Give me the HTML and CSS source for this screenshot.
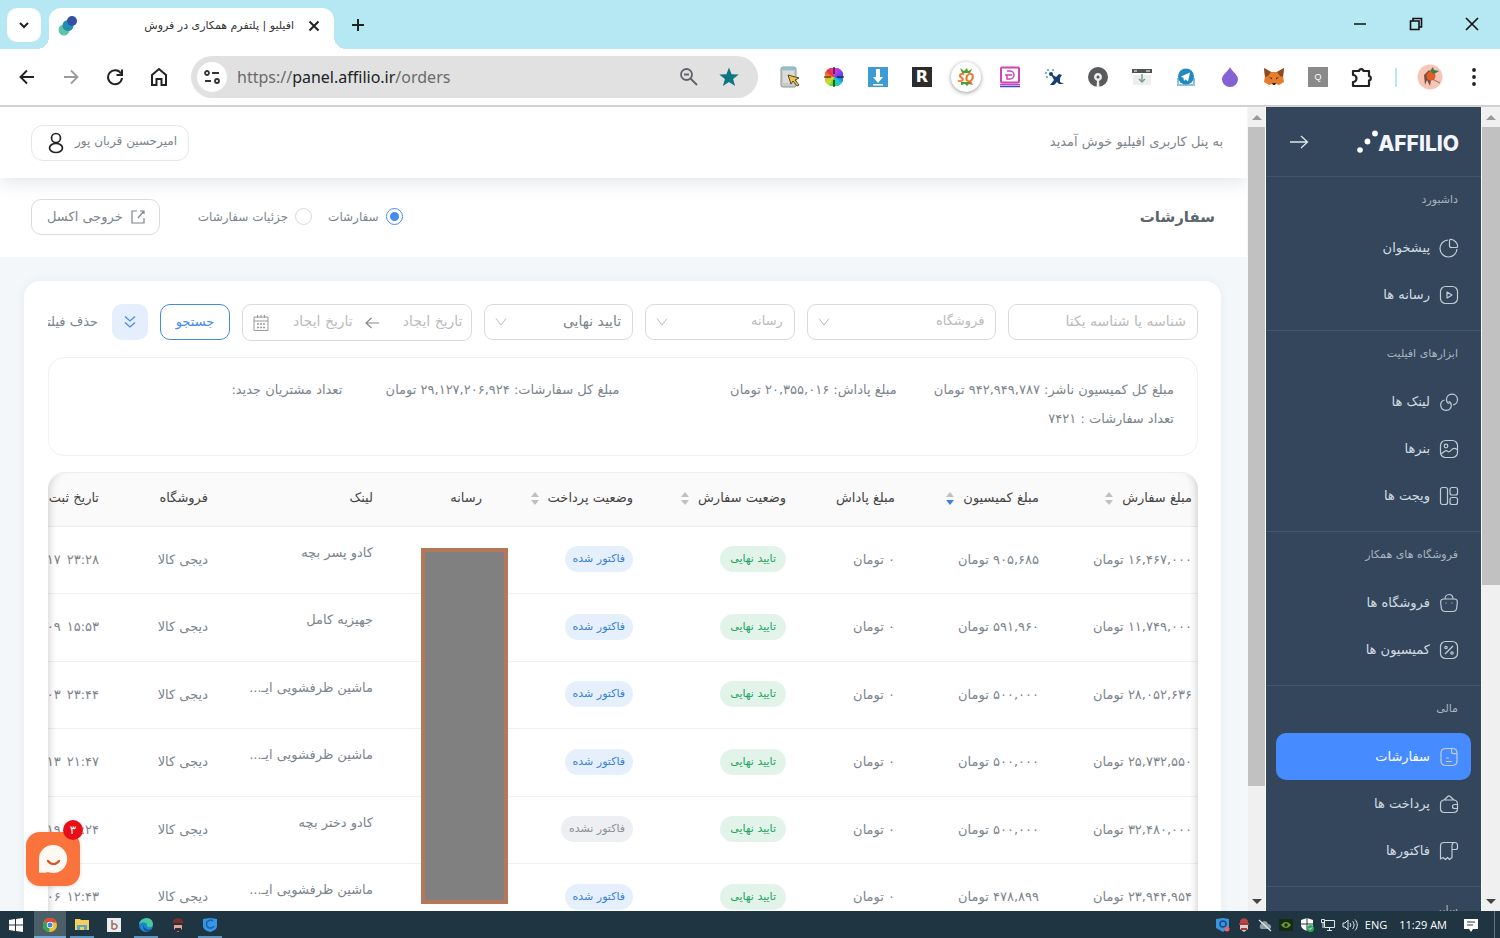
FILE: index.html
```html
<!DOCTYPE html>
<html lang="fa">
<head>
<meta charset="utf-8">
<title>افیلیو | پلتفرم همکاری در فروش</title>
<link rel="stylesheet" href="styles.css">
</head>
<body>
<div class="screen">
  <header class="tabstrip">
    <button class="tab-search" aria-label="Search tabs"><svg width="12" height="12" viewBox="0 0 12 12"><path d="M2 4l4 4 4-4" fill="none" stroke="#222" stroke-width="2"/></svg></button>
    <div class="tab">
      <svg width="22" height="22" viewBox="0 0 22 22"><circle cx="7" cy="15" r="5.500" fill="#5fc3a4"/><circle cx="11" cy="10.500" r="5.500" fill="#1f8fb4"/><circle cx="15" cy="6" r="5" fill="#3650a4"/></svg>
      <span class="tab-title" dir="rtl">افیلیو | پلتفرم همکاری در فروش</span>
      <button class="bare" aria-label="Close tab"><svg width="12" height="12" viewBox="0 0 12 12"><path d="M1.500 1.500l9 9M10.500 1.500l-9 9" stroke="#222" stroke-width="2"/></svg></button>
    </div>
    <button class="bare new-tab" aria-label="New tab"><svg width="14" height="14" viewBox="0 0 14 14"><path d="M7 1v12M1 7h12" stroke="#222" stroke-width="2"/></svg></button>
    <div class="window-controls">
      <button class="bare" aria-label="Minimize"><svg width="14" height="14" viewBox="0 0 14 14"><path d="M1 7h12" stroke="#111" stroke-width="1.500"/></svg></button>
      <button class="bare" aria-label="Restore"><svg width="14" height="14" viewBox="0 0 14 14" fill="none" stroke="#111" stroke-width="1.600"><path d="M1.500 4h8.500v8.500H1.500zM4 4V1.500h8.500V10H10"/></svg></button>
      <button class="bare" aria-label="Close"><svg width="14" height="14" viewBox="0 0 14 14"><path d="M1 1l12 12M13 1L1 13" stroke="#111" stroke-width="1.600"/></svg></button>
    </div>
  </header>

  <nav class="toolbar" aria-label="Browser toolbar">
    <button class="tool" aria-label="Back"><svg width="16" height="16" viewBox="0 0 16 16" fill="none" stroke="#222" stroke-width="1.900"><path d="M15 8H2M8 1.500L1.500 8 8 14.500"/></svg></button>
    <button class="tool" aria-label="Forward"><svg width="16" height="16" viewBox="0 0 16 16" fill="none" stroke="#9a9a9a" stroke-width="1.800"><path d="M1 8h13M8 1.500L14.500 8 8 14.500"/></svg></button>
    <button class="tool" aria-label="Reload"><svg width="18" height="18" viewBox="0 0 18 18" fill="none" stroke="#222" stroke-width="2"><path d="M15 5.500A7 7 0 1 0 16 10M16 1.500v5.500h-5.500"/></svg></button>
    <button class="tool" aria-label="Home"><svg width="18" height="20" viewBox="0 0 18 20" fill="none" stroke="#222" stroke-width="2"><path d="M2 8l7-6 7 6v10h-4.500v-6h-5v6H2z"/></svg></button>
    <div class="omnibox">
      <button class="site-info" aria-label="Site information"><svg width="18" height="14" viewBox="0 0 18 14" fill="none" stroke="#333" stroke-width="1.800"><circle cx="4" cy="3" r="2"/><path d="M9 3h7M2 11h6"/><circle cx="14" cy="11" r="2"/></svg></button>
      <a class="url" href="#">https://<b>panel.affilio.ir</b>/orders</a>
      <button class="bare" aria-label="Zoom"><svg width="20" height="20" viewBox="0 0 20 20" fill="none" stroke="#5f6368" stroke-width="1.800"><circle cx="7.500" cy="7.500" r="5.500"/><path d="M11.500 11.500l6.500 6.500M5 7.500h5"/></svg></button>
      <button class="bare star" aria-label="Bookmark"><svg width="20" height="20" viewBox="0 0 20 20"><path d="M10 0.500l2.600 6.700 7.100.3-5.600 4.500 2 7L10 15l-6.100 4 2-7L.3 7.500l7.100-.3z" fill="#0d7680"/></svg></button>
    </div>
    <div class="extensions">
      <button class="tool" aria-label="Picker"><svg width="22" height="22" viewBox="0 0 22 22"><rect x="2" y="1" width="15" height="20" rx="2" fill="#c7cbc9" stroke="#8a9596"/><path d="M2 4V1h15v3z" fill="#8dbfca"/><rect x="4" y="5" width="11" height="12" fill="#dadcda"/><path d="M9 9l11 3-4 2 4 5-2 1-4-5-2 3z" fill="#edc443" stroke="#554a28"/></svg></button>
      <button class="tool" aria-label="Colors"><span class="wheel"><svg width="20" height="20" viewBox="0 0 20 20"><path d="M10 0v7M10 13v7M0 10h7M13 10h7" stroke="#111" stroke-width="1.200"/></svg></span></button>
      <button class="tool" aria-label="Download"><svg width="20" height="20" viewBox="0 0 20 20"><path fill="#3e9bd6" d="M0 0h20v20H0z"/><path fill="#fff" d="M8 2h4v8h3l-5 6-5-6h3zM5 17h10v1.500H5z"/></svg></button>
      <button class="tool ext-r">R</button>
      <button class="tool"><span class="sq"><svg width="20" height="20" viewBox="0 0 20 20" fill="#4e9f34"><path d="M4 1l4 3 3-3 1 3 4-2-2 4H6zM5 15h10l2 3-4-1-2 2-2-2-4 1z"/></svg><span>SQ</span></span></button>
      <button class="tool" aria-label="D"><svg width="22" height="22" viewBox="0 0 22 22" fill="none"><rect x="2" y="1.500" width="18" height="15" rx="1" stroke="#d243b2" stroke-width="2"/><path d="M8 5h3a4 4 0 0 1 0 8H8V9h5M6 9h4" stroke="#d243b2" stroke-width="1.500"/><path d="M1 18.500h20" stroke="#bd45ce" stroke-width="1.500"/><path d="M1 20.500h20" stroke="#4349b8" stroke-width="1.500"/></svg></button>
      <button class="tool" aria-label="Satellite"><svg width="20" height="20" viewBox="0 0 20 20" fill="#163f78"><path d="M6 6l6 4 3-3 3 1-2 3 0 4 4 2h-5l-2-2-3 3H6l4-5z"/><circle cx="7" cy="7" r="2"/><g fill="#4a9ed0"><circle cx="2" cy="6" r="1"/><circle cx="4" cy="3" r="1"/><circle cx="3" cy="10" r="1"/><circle cx="9" cy="3" r="1"/></g></svg></button>
      <button class="tool" aria-label="Keyhole"><svg width="20" height="20" viewBox="0 0 20 20"><circle cx="10" cy="10" r="10" fill="#585a5b"/><path d="M8.500 20l.5-6-1.500-1a4 4 0 1 1 5 0L11 14l.5 6z" fill="#eee"/><circle cx="10" cy="10" r="1.500" fill="#555"/></svg></button>
      <button class="tool" aria-label="Save page"><svg width="20" height="18" viewBox="0 0 20 18"><path d="M0 1h20v4H0z" fill="#4d5355"/><path d="M2 3h3M14 3h4" stroke="#fff"/><path d="M1 7h18v10H1z" fill="#eee"/><path d="M10 6v8M7 11l3 3 3-3" fill="none" stroke="#71a58f" stroke-width="1.500"/></svg></button>
      <button class="tool" aria-label="Telegram"><svg width="18" height="19" viewBox="0 0 18 19"><path d="M1 10v7h16v-7" fill="none" stroke="#8cc2de" stroke-width="2"/><circle cx="9" cy="8.500" r="8" fill="#2289c2"/><path d="M4 8.500l9-4-2 9-2.500-2L7 13l-.5-3z" fill="#fff"/></svg></button>
      <button class="tool" aria-label="Drop"><svg width="16" height="20" viewBox="0 0 16 20"><path d="M8 0c2 5 8 7 8 12.500a8 7.500 0 0 1-16 0C0 7 6 5 8 0z" fill="#8561d3"/></svg></button>
      <button class="tool" aria-label="Wallet"><svg width="20" height="18" viewBox="0 0 20 18"><path d="M0 0l7 4h6l7-4-1 8 1 6-5 3-3-1H8l-3 1-5-3 1-6z" fill="#e67c2c"/><path d="M0 0l7 4-3 4-3 1zM20 0l-7 4 3 4 3 1z" fill="#874b27"/><path d="M5 9l3 1v1.500zM15 9l-3 1v1.500zM8 15h4l-1 2H9z" fill="#2b2524"/></svg></button>
      <button class="tool"><span class="ext-q">Q</span></button>
      <button class="tool" aria-label="Extensions"><svg width="22" height="21" viewBox="0 0 22 21"><path d="M2 4h6a2.300 2.300 0 0 1 4.500 0H18v5a2.300 2.300 0 0 1 0 4.500V19H2v-4a3 3 0 0 0 0-7z" fill="none" stroke="#222" stroke-width="2.200" stroke-linejoin="round"/></svg></button>
    </div>
    <span class="tool-divider"></span>
    <button class="tool" aria-label="Profile"><svg width="26" height="26" viewBox="0 0 26 26"><circle cx="13" cy="13" r="12.500" fill="#f6c5b5"/><path d="M7 11l5-5 3 4-2 12-3-6-2 5z" fill="#725043"/><circle cx="14" cy="12" r="4.500" fill="#e55a25"/><path d="M13 7l3-4 1 3 5 1-5 3z" fill="#397d43"/><path d="M15 15l8 4" stroke="#936b59"/></svg></button>
    <button class="tool" aria-label="Menu"><svg width="6" height="18" viewBox="0 0 6 18" fill="#222"><circle cx="3" cy="2" r="1.900"/><circle cx="3" cy="9" r="1.900"/><circle cx="3" cy="16" r="1.900"/></svg></button>
  </nav>

  <div class="viewport">
    <div class="content" dir="rtl">
      <header class="welcome-bar">
        <span class="welcome">به پنل کاربری افیلیو خوش آمدید</span>
        <button class="user"><span>امیرحسین قربان پور</span><svg width="16" height="22" viewBox="0 0 16 22" fill="none" stroke="#222" stroke-width="1.700"><circle cx="8" cy="6" r="4.500"/><ellipse cx="8" cy="16" rx="6.500" ry="4.500"/></svg></button>
      </header>
      <section class="title-bar">
        <h1>سفارشات</h1>
        <label class="radio"><input type="radio" name="view" checked><span>سفارشات</span></label>
        <label class="radio"><input type="radio" name="view"><span>جزئیات سفارشات</span></label>
        <button class="export"><svg width="14" height="14" viewBox="0 0 14 14" fill="none" stroke="#7c848c" stroke-width="1.200"><path d="M6 1H1v12h12V8M9 1h4v3M12.500 1.500L7 8"/></svg><span>خروجی اکسل</span></button>
      </section>

      <main class="card">
        <form class="filters">
          <input class="field" type="text" placeholder="شناسه یا شناسه یکتا" aria-label="شناسه یا شناسه یکتا">
          <div class="select"><select class="field empty" aria-label="فروشگاه"><option>فروشگاه</option></select><svg width="12" height="10" viewBox="0 0 12 10"><path d="M1 1.500L6 8l5-6.500" fill="none" stroke="#bbb"/></svg></div>
          <div class="select"><select class="field empty" aria-label="رسانه"><option>رسانه</option></select><svg width="12" height="10" viewBox="0 0 12 10"><path d="M1 1.500L6 8l5-6.500" fill="none" stroke="#bbb"/></svg></div>
          <div class="select"><select class="field" aria-label="وضعیت"><option>تایید نهایی</option></select><svg width="12" height="10" viewBox="0 0 12 10"><path d="M1 1.500L6 8l5-6.500" fill="none" stroke="#bbb"/></svg></div>
          <div class="range">
            <input type="text" placeholder="تاریخ ایجاد" aria-label="تاریخ ایجاد از">
            <svg width="14" height="12" viewBox="0 0 14 12"><path d="M14 6H1M6.500 1L1 6l5.500 5" fill="none" stroke="#888" stroke-width="1.200"/></svg>
            <input type="text" placeholder="تاریخ ایجاد" aria-label="تاریخ ایجاد تا">
            <svg width="16" height="18" viewBox="0 0 16 18" fill="none" stroke="#999"><path d="M1 3h14v13.500H1zM1 7h14M4.500 1v3M8 1v3M11.500 1v3"/><path d="M4 10h2m1 0h2m1 0h2M4 13.500h2m1 0h2m1 0h2" stroke-width="1.500"/></svg>
          </div>
          <button type="button" class="search">جستجو</button>
          <button type="button" class="more" aria-label="فیلترهای بیشتر"><svg width="12" height="14" viewBox="0 0 12 14" fill="none" stroke="#468bef" stroke-width="1.300"><path d="M1 1.500l5 4.500 5-4.500M1 7.500L6 12l5-4.500"/></svg></button>
          <button type="reset" class="clear">حذف فیلتر</button>
        </form>

        <section class="stats">
          <p>مبلغ کل کمیسیون ناشر: ۹۴۲,۹۴۹,۷۸۷ تومان</p>
          <p>مبلغ پاداش: ۲۰,۳۵۵,۰۱۶ تومان</p>
          <p>مبلغ کل سفارشات: ۲۹,۱۲۷,۲۰۶,۹۲۴ تومان</p>
          <p>تعداد مشتریان جدید:</p>
          <p>تعداد سفارشات : ۷۴۲۱</p>
        </section>

        <div class="table-wrap">
          <table>
            <colgroup><col class="c-order"><col class="c-fee"><col class="c-bonus"><col class="c-status"><col class="c-pay"><col class="c-media"><col class="c-link"><col class="c-shop"><col></colgroup>
            <thead><tr>
              <th>مبلغ سفارش<span class="sort"></span></th>
              <th>مبلغ کمیسیون<span class="sort desc"></span></th>
              <th>مبلغ پاداش</th>
              <th>وضعیت سفارش<span class="sort"></span></th>
              <th>وضعیت پرداخت<span class="sort"></span></th>
              <th>رسانه</th><th>لینک</th><th>فروشگاه</th><th>تاریخ ثبت</th>
            </tr></thead>
            <tbody>
              <tr><td>۱۶,۴۶۷,۰۰۰ تومان</td><td>۹۰۵,۶۸۵ تومان</td><td>۰ تومان</td><td><span class="tag green">تایید نهایی</span></td><td><span class="tag blue">فاکتور شده</span></td><td></td><td class="link">کادو پسر بچه</td><td>دیجی کالا</td><td><span class="time">۲۳:۲۸</span><bdo dir="ltr">-۱۷</bdo></td></tr>
              <tr><td>۱۱,۷۴۹,۰۰۰ تومان</td><td>۵۹۱,۹۶۰ تومان</td><td>۰ تومان</td><td><span class="tag green">تایید نهایی</span></td><td><span class="tag blue">فاکتور شده</span></td><td></td><td class="link">جهیزیه کامل</td><td>دیجی کالا</td><td><span class="time">۱۵:۵۳</span><bdo dir="ltr">-۰۹</bdo></td></tr>
              <tr><td>۲۸,۰۵۲,۶۳۶ تومان</td><td>۵۰۰,۰۰۰ تومان</td><td>۰ تومان</td><td><span class="tag green">تایید نهایی</span></td><td><span class="tag blue">فاکتور شده</span></td><td></td><td class="link">ماشین ظرفشویی ایـ...</td><td>دیجی کالا</td><td><span class="time">۲۳:۴۴</span><bdo dir="ltr">-۰۳</bdo></td></tr>
              <tr><td>۲۵,۷۳۲,۵۵۰ تومان</td><td>۵۰۰,۰۰۰ تومان</td><td>۰ تومان</td><td><span class="tag green">تایید نهایی</span></td><td><span class="tag blue">فاکتور شده</span></td><td></td><td class="link">ماشین ظرفشویی ایـ...</td><td>دیجی کالا</td><td><span class="time">۲۱:۴۷</span><bdo dir="ltr">-۱۳</bdo></td></tr>
              <tr><td>۳۲,۴۸۰,۰۰۰ تومان</td><td>۵۰۰,۰۰۰ تومان</td><td>۰ تومان</td><td><span class="tag green">تایید نهایی</span></td><td><span class="tag grey">فاکتور نشده</span></td><td></td><td class="link">کادو دختر بچه</td><td>دیجی کالا</td><td><span class="time">۱۳:۲۴</span><bdo dir="ltr">-۱۹</bdo></td></tr>
              <tr><td>۲۳,۹۴۴,۹۵۴ تومان</td><td>۴۷۸,۸۹۹ تومان</td><td>۰ تومان</td><td><span class="tag green">تایید نهایی</span></td><td><span class="tag blue">فاکتور شده</span></td><td></td><td class="link">ماشین ظرفشویی ایـ...</td><td>دیجی کالا</td><td><span class="time">۱۲:۴۳</span><bdo dir="ltr">-۰۶</bdo></td></tr>
            </tbody>
          </table>
          <div class="mask"></div>
        </div>
      </main>
    </div>

    <div class="scrollbar"><span class="arrow up"></span><span class="thumb long"></span><span class="arrow down"></span></div>

    <aside class="sidebar" dir="rtl">
      <div class="brand">
        <div class="logo" dir="ltr"><svg width="26" height="26" viewBox="0 0 26 26" fill="#fff"><circle cx="4" cy="21" r="2.800"/><circle cx="11.500" cy="12.500" r="2.900"/><circle cx="19" cy="4.500" r="2.900"/></svg><span>AFFILIO</span></div>
        <button class="bare" aria-label="بستن منو"><svg width="20" height="14" viewBox="0 0 20 14" fill="none" stroke="#dfe5ea" stroke-width="1.300"><path d="M1 7h17M12 1l6.500 6L12 13"/></svg></button>
      </div>
      <nav class="group"><h2>داشبورد</h2>
        <a href="#"><svg width="20" height="20" viewBox="0 0 20 20"><path d="M9 2a8.500 8.500 0 1 0 9 9"/><path d="M10.500 3.500c0-2 .5-2.500 2.500-2s5 3 5.500 5.500-.5 2.500-2 2.500h-4c-1.500 0-2-.5-2-2z"/></svg>پیشخوان</a>
        <a href="#"><svg width="20" height="20" viewBox="0 0 20 20"><rect x="1.500" y="1.500" width="17" height="17" rx="5"/><path d="M8 7l5 3-5 3z"/></svg>رسانه ها</a>
      </nav>
      <nav class="group"><h2>ابزارهای افیلیت</h2>
        <a href="#"><svg width="20" height="20" viewBox="0 0 20 20"><path d="M14 13a5.500 5.500 0 1 0-6.500-5.500c-.1 2 .8 3.500 2.800 4"/><path d="M5.500 8a5.300 5.300 0 1 0 6.800 5.500c.1-2-.8-3.500-2.800-4"/></svg>لینک ها</a>
        <a href="#"><svg width="20" height="20" viewBox="0 0 20 20"><rect x="1.500" y="1.500" width="17" height="17" rx="5"/><circle cx="7" cy="7" r="1.800"/><path d="M2 15l4-3c1-.6 2-.2 3 .6 1 .7 2 0 4-2.200 1.500-1.400 3-1.400 5 0"/></svg>بنرها</a>
        <a href="#"><svg width="20" height="20" viewBox="0 0 20 20"><rect x="1.500" y="1.500" width="7" height="17" rx="2"/><rect x="11" y="1.500" width="7.500" height="7.500" rx="2"/><rect x="11" y="11.500" width="7.500" height="7" rx="2"/></svg>ویجت ها</a>
      </nav>
      <nav class="group"><h2>فروشگاه های همکار</h2>
        <a href="#"><svg width="20" height="20" viewBox="0 0 20 20"><path d="M5 6h10c2.500 0 3.500 1 3.300 3.500l-.6 5.500c-.3 2.500-1.500 3.500-4 3.500H6.300c-2.500 0-3.700-1-4-3.500l-.6-5.500C1.500 7 2.500 6 5 6zM6 6c0-2.500 1.500-4.500 4-4.500S14 3.500 14 6"/><path d="M6.500 10h1M12.500 10h1"/></svg>فروشگاه ها</a>
        <a href="#"><svg width="20" height="20" viewBox="0 0 20 20"><rect x="1.500" y="1.500" width="17" height="17" rx="5"/><path d="M6 14l8-8"/><circle cx="7" cy="7.500" r="1.200"/><circle cx="13" cy="13" r="1.200"/></svg>کمیسیون ها</a>
      </nav>
      <nav class="group"><h2>مالی</h2>
        <a class="active" href="#"><svg width="20" height="20" viewBox="0 0 20 20"><path d="M13.500 1.500H7C3.500 1.500 2 3 2 6v8c0 3 1.500 4.500 5 4.500h6c3.500 0 5-1.500 5-4.500V6c0-3-1.500-4.500-4.500-4.500zM12.500 2v2.500c0 1.500.7 2.200 2.200 2.200H18M7 11h3M7 14.500h6"/></svg>سفارشات</a>
        <a href="#"><svg width="20" height="20" viewBox="0 0 20 20"><path d="M5.500 6h9c2.500 0 4 1.500 4 4v4.500c0 2.500-1.500 4-4 4h-9c-2.500 0-4-1.500-4-4V10c0-2.500 1.500-4 4-4zM5 6l4-3.800c.7-.6 1.300-.6 2 0L15 6M18.500 10.500h-3a2 2 0 0 0 0 4h3"/></svg>پرداخت ها</a>
        <a href="#"><svg width="20" height="20" viewBox="0 0 20 20"><path d="M16 1.500H5C2.500 1.500 1.500 3 1.500 5v13l2.500-1.500 2.500 2 2-2 2 2 2.500-2v-12c0-2 1-3 3-3s2.500 1 2.500 3v2c0 1.500-.5 2-2 2h-3"/></svg>فاکتورها</a>
      </nav>
      <nav class="group"><h2>سایر</h2></nav>
    </aside>

    <div class="scrollbar outer"><span class="arrow up"></span><span class="thumb short"></span><span class="arrow down"></span></div>

    <button class="chat" aria-label="گفتگو"><svg width="30" height="30" viewBox="0 0 30 30"><path d="M15 1a14 14 0 1 1-5 27c-3 1-6 1-9 .5V15A14 14 0 0 1 15 1z" fill="#fff8f3"/><path d="M10 17c3 4 8 4 11 0" fill="none" stroke="#d05a2c" stroke-width="2.200" stroke-linecap="round"/></svg><span class="badge">۳</span></button>
  </div>

  <footer class="taskbar">
    <button class="start" aria-label="Start"><svg width="14" height="14" viewBox="0 0 14 14" fill="#fff"><path d="M0 2l6-1v5.500H0zM7 1l7-1v6.500H7zM0 7.500h6V13l-6-1zM7 7.500h7V14l-7-1z"/></svg></button>
    <button class="app current" aria-label="Chrome"><svg width="14" height="14" viewBox="0 0 14 14"><circle cx="7" cy="7" r="7" fill="#f0c02d"/><path d="M7 7L1 3.500a7 7 0 0 1 12.500 1H7z" fill="#dc4a3c"/><path d="M7 7l-1 7A7 7 0 0 1 1 3.500z" fill="#35a156"/><circle cx="7" cy="7" r="3.200" fill="#fff"/><circle cx="7" cy="7" r="2.500" fill="#4583e6"/></svg></button>
    <button class="app open" aria-label="Files"><svg width="14" height="13" viewBox="0 0 14 13"><path d="M0 1h5l1 1h8v10H0z" fill="#f4cf5b"/><path d="M2 7h10v5H2z" fill="#5aa4ca"/><path d="M5 9h4v3H5z" fill="#f4cf5b"/></svg></button>
    <button class="app" aria-label="App"><svg width="14" height="14" viewBox="0 0 14 14"><path fill="#e9eef1" d="M0 0h14v14H0z"/><path d="M5 2v9M5 7a2.800 2.500 0 1 1 0 3" fill="none" stroke="#a76965" stroke-width="1.500"/></svg></button>
    <button class="app open" aria-label="Edge"><svg width="14" height="14" viewBox="0 0 14 14"><circle cx="7" cy="7" r="7" fill="#1987d2"/><path d="M0 6C1 0 13-3 14 6c0 4-5 4-6 2 1-3-3-5-8-2z" fill="#49ca9c"/><path d="M5 6c-1 5 4 7 8 5-3 5-11 2-8-5z" fill="#164f8c"/></svg></button>
    <button class="app" aria-label="Agent"><svg width="12" height="14" viewBox="0 0 12 14"><path d="M1 4c0-5 10-5 10 0v2H1z" fill="#782f31"/><path d="M2 6h8v5L6 14l-4-3z" fill="#d7aaa0"/><path d="M1 5h10v2H1zM3 10h6v3H3z" fill="#362a30"/></svg></button>
    <button class="app open" aria-label="Shield"><svg width="14" height="14" viewBox="0 0 14 14"><path d="M0 1l7-1 7 1v7c0 3-3 5-7 6-4-1-7-3-7-6z" fill="#3596e5"/><path d="M10 3a4 4 0 1 0 1 5" fill="none" stroke="#1b5daa" stroke-width="1.500"/></svg></button>
    <div class="tray">
      <svg width="14" height="14" viewBox="0 0 14 14"><path d="M0 1l7-1 6 1v8l-6 5-7-4z" fill="#3b94df"/><circle cx="7" cy="6" r="3" fill="none" stroke="#174d86" stroke-width="1.500"/><circle cx="11" cy="11" r="2.500" fill="#ed6264"/></svg>
      <svg width="14" height="14" viewBox="0 0 14 14"><path d="M3 4c0-5 8-5 8 0v2H3z" fill="#bd4245"/><path d="M3 6h8v5l-4 3-4-3z" fill="#dccfca"/><path d="M2 5h10v2H2zM4 10h6v2H4z" fill="#a6393c"/></svg>
      <svg width="14" height="14" viewBox="0 0 14 14"><path d="M3 11a3 3 0 0 1 0-5c1-4 6-4 7 0 4 0 4 5 1 5z" fill="#8f9da5"/><path d="M1 2l12 11" stroke="#dce3e6" stroke-width="1.300"/></svg>
      <svg width="14" height="14" viewBox="0 0 14 14"><path fill="#152b12" d="M0 1h14v12H0z"/><path d="M2 7c3-4 7-4 10 0-3 4-7 4-10 0z" fill="#6d9b36"/><circle cx="7" cy="7" r="1.700" fill="#152b12"/></svg>
      <svg width="14" height="14" viewBox="0 0 14 14"><path d="M1 2l6-2 6 2v5c0 3-3 5-6 6-3-1-6-3-6-6z" fill="#fff"/><path d="M7 0v13M1 6h12" stroke="#203744"/><circle cx="10.500" cy="10.500" r="3.500" fill="#2fa65a"/><path d="M9 10.500l1 1 2-2" stroke="#fff" fill="none"/></svg>
      <svg width="14" height="14" viewBox="0 0 14 14" fill="none" stroke="#e2e8eb"><path d="M3.500 2.500h10v7h-10zM6 12.500h5M8.500 9.500v3M.5 1.500h3v3h-3zM2 5v5"/></svg>
      <svg width="16" height="14" viewBox="0 0 16 14" fill="none" stroke="#e2e8eb"><path d="M1 5h2l3-3v10L3 9H1zM8 5c1 1 1 3 0 4M10.500 3c2 2 2 6 0 8M13 1.500c3 3 3 8 0 11"/></svg>
      <span class="lang">ENG</span><span class="clock">11:29 AM</span>
      <svg class="notice" width="14" height="14" viewBox="0 0 14 14"><path d="M0 1h14v10H9l-2 3-2-3H0z" fill="#fff"/><path d="M3 4h8M3 7h6" stroke="#203744"/></svg>
      <span class="peek"></span>
    </div>
  </footer>
</div>
</body>
</html>
```

FILE: styles.css
```css
* { box-sizing: border-box; }
body { margin: 0; font-family: "DejaVu Sans", sans-serif; font-size: 12px; color: #7c848c; }
button, input, select { font: inherit; color: inherit; margin: 0; }
button { border: 0; background: none; padding: 0; cursor: pointer; }
svg { display: block; flex: none; }
a { text-decoration: none; color: inherit; }
h1, h2, p { margin: 0; }

.screen { height: 100vh; display: flex; flex-direction: column; overflow: hidden; background: #fff; }

/* Browser window */
.tabstrip { flex: none; height: 49px; background: #b5e8f2; display: flex; align-items: flex-start; padding: 8px 0 0 7px; }
.tab-search { width: 34px; height: 34px; border-radius: 10px; background: #fff; display: flex; align-items: center; justify-content: center; margin-right: 8px; }
.tab { position: relative; width: 285px; height: 41px; border-radius: 12px 12px 0 0; background: #fff; display: flex; align-items: center; padding: 0 14px 6px 8px; }
.tab::before, .tab::after { content: ""; position: absolute; bottom: 0; width: 12px; height: 12px; }
.tab::before { left: -12px; background: radial-gradient(circle at 0 0, transparent 12px, #fff 12px); }
.tab::after { right: -12px; background: radial-gradient(circle at 100% 0, transparent 12px, #fff 12px); }
.tab-title { flex: 1; font-size: 11px; color: #333; padding-right: 14px; white-space: nowrap; overflow: hidden; }
.bare { display: flex; align-items: center; justify-content: center; }
.new-tab { margin-left: 17px; height: 34px; }
.window-controls { margin-left: auto; display: flex; }
.window-controls button { width: 56px; height: 32px; }

.toolbar { flex: none; height: 58px; border-bottom: 2px solid #d2d2d4; display: flex; align-items: center; padding: 0 4px 0 5px; background: #fff; }
.tool { width: 44px; height: 44px; display: flex; align-items: center; justify-content: center; flex: none; }
.omnibox { flex: 1; height: 42px; margin: 0 10px; border-radius: 21px; background: #e1e1e2; display: flex; align-items: center; padding: 0 19px 0 6px; }
.site-info { width: 30px; height: 30px; border-radius: 50%; background: #fff; display: flex; align-items: center; justify-content: center; flex: none; }
.url { flex: 1; margin-left: 10px; font-family: "Noto Sans", "Open Sans", sans-serif; font-size: 16px; color: #6a6a6c; }
.url b { font-weight: 400; color: #202124; }
.star { margin-left: 20px; }
.extensions { display: flex; }
.wheel { width: 20px; height: 20px; border-radius: 50%; background: conic-gradient(#e53ac8, #a13af0, #3157f0, #29c6de, #2fd34a, #c6e22f, #f1a629, #ef3030, #e53ac8) center / 18px 18px no-repeat; }
.ext-r { font: 700 16px/20px "DejaVu Sans", sans-serif; color: #fff; background: linear-gradient(#2c2c2d, #2c2c2d) center / 20px 20px no-repeat; }
.sq { display: grid; place-items: center; width: 30px; height: 30px; border-radius: 50%; background: #fff; box-shadow: 0 1px 4px #999; font: italic 700 13px/30px "Open Sans", sans-serif; color: #ee7426; }
.sq > * { grid-area: 1 / 1; }
.ext-q { width: 20px; height: 20px; background: #8a8a8a; color: #fff; font: 9px/20px "Liberation Sans", sans-serif; }
.tool-divider { flex: none; width: 2px; height: 19px; margin: 0 11px; background: #b5e8f2; }

.viewport { flex: 1; min-height: 0; display: flex; position: relative; }
.scrollbar { flex: none; width: 19px; background: #f0f0f1; display: flex; flex-direction: column; border-right: 1px solid #fff; border-left: 1px solid #f5f7f9; }
.scrollbar.outer { border-right: 0; }
.arrow { height: 20px; display: flex; align-items: center; justify-content: center; }
.arrow::before { content: ""; border: 5px solid transparent; }
.arrow.up::before { border-top: 0; border-bottom-color: #999; }
.arrow.down { margin-top: auto; }
.arrow.down::before { border-bottom: 0; border-top-color: #454545; }
.thumb { background: #c1c1c1; }
.thumb.long { height: 82%; }
.thumb.short { height: 57%; }

/* Panel */
.content { flex: 1; min-width: 0; overflow: hidden; background: #f3f7fa; }
.welcome-bar { position: relative; height: 71px; padding: 0 24px 0 31px; display: flex; align-items: center; justify-content: space-between; background: #fff; box-shadow: 0 4px 18px #3c506e26; }
.welcome { font-size: 13px; padding-bottom: 3px; }
.user { height: 36px; border: 1px solid #e4e6e9; border-radius: 12px; display: flex; align-items: center; gap: 11px; padding: 0 11px 0 16px; }
.user span { padding-bottom: 3px; }
.title-bar { height: 79px; background: #fff; display: flex; align-items: center; padding: 0 32px 2px 31px; gap: 16px; }
h1 { font-size: 15px; font-weight: 700; color: #5c646d; margin-left: auto; }
.radio { display: flex; align-items: center; gap: 7px; }
.radio input { appearance: none; width: 17px; height: 17px; border: 1px solid #d9d9d9; border-radius: 50%; }
.radio input:checked { border-color: #468bef; background: radial-gradient(circle, #468bef 4px, #fff 5px); }
.export { height: 36px; border: 1px solid #d9dcdf; border-radius: 10px; display: flex; align-items: center; gap: 8px; padding: 0 14px 0 15px; margin-right: 22px; font-size: 13px; }

.card { margin: 24px 26px 0 24px; padding: 23px 23px 23px 24px; background: #fff; border-radius: 16px 16px 0 0; box-shadow: 0 0 10px #3c506e12; min-height: 700px; }
.filters { display: grid; grid-template-columns: 190fr 190fr 150fr 150fr 230fr 70px 36px 52px; gap: 12px; overflow: hidden; align-items: start; }
.field { width: 100%; height: 36px; border: 1px solid #d9dbde; border-radius: 9px; background: #fff; padding: 0 11px 3px; outline: 0; font-size: 14px; }
.field.empty { color: #bbb; font-size: 13px; }
input::placeholder { color: #bbb; opacity: 1; }
.select { position: relative; }
.select select { appearance: none; }
.select svg { position: absolute; left: 11px; top: 13px; pointer-events: none; }
.range { height: 37px; border: 1px solid #d9dbde; border-radius: 9px; display: flex; align-items: center; padding: 0 8px 0 10px; gap: 12px; min-width: 0; }
.range input { border: 0; padding: 0 0 3px; width: 0; flex: 1; outline: 0; background: none; font-size: 14px; }
.search { height: 36px; border: 1px solid #468bd8; border-radius: 10px; color: #468bef; padding-bottom: 2px; font-size: 13px; }
.more { height: 36px; border-radius: 10px; background: #e4eefd; display: flex; align-items: center; justify-content: center; }
.clear { height: 36px; white-space: nowrap; text-align: right; padding: 0 2px 2px 0; font-size: 13px; }

.stats { margin-top: 16px; min-height: 99px; border: 1px solid #eef0f2; border-radius: 16px; padding: 18px 23px 18px 16px; display: grid; grid-template-columns: repeat(4, 1fr); grid-auto-rows: 29px; white-space: nowrap; font-size: 13px; line-height: 28px; }

.table-wrap { position: relative; margin-top: 16px; overflow: hidden; border-radius: 16px 16px 0 0; border-top: 1px solid #eee; font-size: 13px; }
.table-wrap::after { content: ""; position: absolute; inset: 0; pointer-events: none; border-radius: inherit; box-shadow: inset 9px 0 8px -8px #0003, inset -9px 0 8px -8px #0003; }
table { width: 100%; table-layout: fixed; border-collapse: separate; border-spacing: 0; }
.c-order, .c-status { width: 153px; }
.c-fee { width: 144px; }
.c-bonus, .c-media, .c-shop { width: 109px; }
.c-pay { width: 151px; }
.c-link { width: 165px; }
th, td { text-align: right; padding: 0 6px 2px 0; white-space: nowrap; }
th { height: 54px; padding-bottom: 4px; background: #fafafa; border-bottom: 1px solid #ececec; color: #444; font-weight: 400; }
td { height: 67px; border-bottom: 1px solid #f0f1f3; }
tr:nth-child(even) td { height: 68px; }
td.link { padding-bottom: 16px; }
.sort { display: inline-flex; flex-direction: column; gap: 3px; vertical-align: middle; margin-right: 9px; }
.sort::before, .sort::after { content: ""; border: 4px solid transparent; }
.sort::before { border-top: 0; border-bottom: 5px solid #bfbfbf; }
.sort::after { border-bottom: 0; border-top: 5px solid #bfbfbf; }
.sort.desc::after { border-top-color: #3f80dd; }
.tag { display: inline-block; height: 26px; line-height: 25px; border-radius: 13px; padding: 0 8px; font-size: 11px; }
.green { background: #e2f4ea; color: #22a35f; padding: 0 10px; }
.blue { background: #e6f0fd; color: #3480dc; }
.grey { background: #eeeff2; color: #8b9097; }
.time { margin-left: 6px; }
.mask { position: absolute; left: 32.400%; top: 75px; width: 87px; height: 356px; background: #808080; border: 4px solid #b5775a; }

/* Side menu */
.sidebar { flex: none; width: 215px; background: #34465c; overflow: hidden; color: #d3dbe2; }
.brand { height: 70px; border-bottom: 1px solid #44566a; display: flex; align-items: center; justify-content: space-between; padding: 0 22px 0 23px; }
.logo { display: flex; align-items: center; font: 800 21px/24px Inter, sans-serif; color: #f2f5fc; }
.logo span { padding-top: 4px; }
.logo svg { margin-right: -4px; }
.group { border-bottom: 1px solid #44586d; padding: 0 10px 12px; }
.group h2 { font-size: 11px; font-weight: 400; height: 47px; line-height: 46px; padding-right: 13px; color: #a9b5c0; }
.group a { height: 47px; border-radius: 10px; display: flex; align-items: center; gap: 9px; padding-right: 12px; font-size: 13px; }
.group svg { fill: none; stroke: #c2ccd5; stroke-width: 1.200; stroke-linejoin: round; }
.group .active { background: #468bff; color: #fff; }

.chat { position: absolute; left: 26px; bottom: 25px; width: 54px; height: 54px; border-radius: 14px; background: #fb733c; display: flex; align-items: center; justify-content: center; box-shadow: 0 1px 4px #0002; }
.badge { position: absolute; right: -3px; top: -12px; width: 20px; height: 20px; border-radius: 50%; background: #e80f17; color: #fff; line-height: 20px; }

/* Taskbar */
.taskbar { flex: none; height: 27px; background: #1f3541; display: flex; color: #fff; }
.taskbar button { display: flex; align-items: center; justify-content: center; height: 27px; }
.start { width: 31px; margin-right: 3px; }
.app { width: 32px; }
.current { background: #4b5f69; box-shadow: inset 0 -2px #6fa9d4; }
.open { background: linear-gradient(#5b95c4, #5b95c4) center bottom / 24px 2px no-repeat; }
.tray { margin-left: auto; display: flex; align-items: center; gap: 7px; font: 11px/27px "Open Sans", sans-serif; }
.clock { margin-left: 5px; }
.notice { margin-left: 10px; }
.peek { width: 1px; height: 27px; background: #667680; margin: 0 5px 0 9px; }
```
